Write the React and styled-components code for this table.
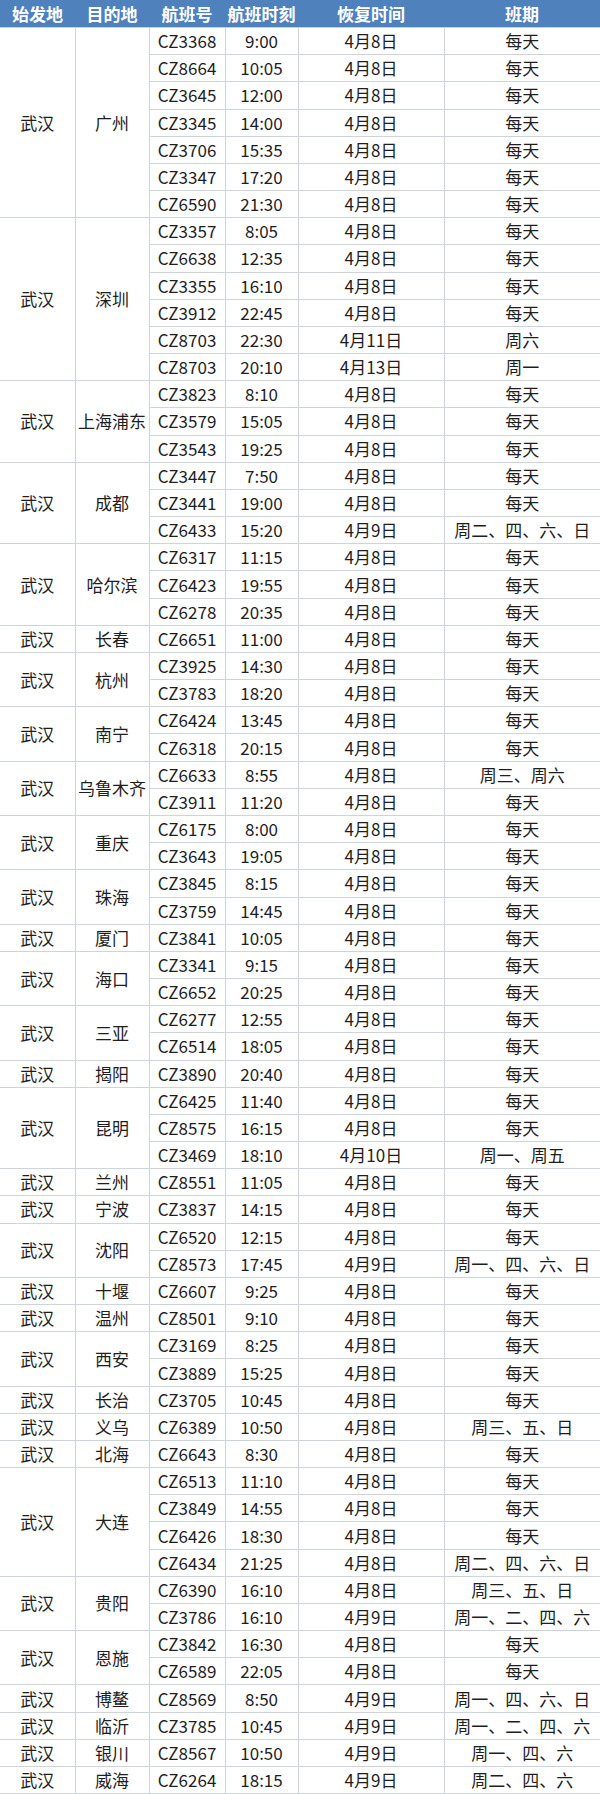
import React from 'react'
import styled, { createGlobalStyle } from 'styled-components'

const GlobalStyle = createGlobalStyle`
  html, body {
    margin: 0;
    padding: 0;
    background: #ffffff;
  }
  body {
    font-family: "Noto Sans CJK SC", "Noto Sans", sans-serif;
  }
`

// flight | time | date (default 4月8日) | days (default 每天)
const groups = [
  ['广州', [
    ['CZ3368', '9:00'], ['CZ8664', '10:05'], ['CZ3645', '12:00'], ['CZ3345', '14:00'],
    ['CZ3706', '15:35'], ['CZ3347', '17:20'], ['CZ6590', '21:30'],
  ]],
  ['深圳', [
    ['CZ3357', '8:05'], ['CZ6638', '12:35'], ['CZ3355', '16:10'], ['CZ3912', '22:45'],
    ['CZ8703', '22:30', '4月11日', '周六'], ['CZ8703', '20:10', '4月13日', '周一'],
  ]],
  ['上海浦东', [['CZ3823', '8:10'], ['CZ3579', '15:05'], ['CZ3543', '19:25']]],
  ['成都', [['CZ3447', '7:50'], ['CZ3441', '19:00'], ['CZ6433', '15:20', '4月9日', '周二、四、六、日']]],
  ['哈尔滨', [['CZ6317', '11:15'], ['CZ6423', '19:55'], ['CZ6278', '20:35']]],
  ['长春', [['CZ6651', '11:00']]],
  ['杭州', [['CZ3925', '14:30'], ['CZ3783', '18:20']]],
  ['南宁', [['CZ6424', '13:45'], ['CZ6318', '20:15']]],
  ['乌鲁木齐', [['CZ6633', '8:55', '4月8日', '周三、周六'], ['CZ3911', '11:20']]],
  ['重庆', [['CZ6175', '8:00'], ['CZ3643', '19:05']]],
  ['珠海', [['CZ3845', '8:15'], ['CZ3759', '14:45']]],
  ['厦门', [['CZ3841', '10:05']]],
  ['海口', [['CZ3341', '9:15'], ['CZ6652', '20:25']]],
  ['三亚', [['CZ6277', '12:55'], ['CZ6514', '18:05']]],
  ['揭阳', [['CZ3890', '20:40']]],
  ['昆明', [['CZ6425', '11:40'], ['CZ8575', '16:15'], ['CZ3469', '18:10', '4月10日', '周一、周五']]],
  ['兰州', [['CZ8551', '11:05']]],
  ['宁波', [['CZ3837', '14:15']]],
  ['沈阳', [['CZ6520', '12:15'], ['CZ8573', '17:45', '4月9日', '周一、四、六、日']]],
  ['十堰', [['CZ6607', '9:25']]],
  ['温州', [['CZ8501', '9:10']]],
  ['西安', [['CZ3169', '8:25'], ['CZ3889', '15:25']]],
  ['长治', [['CZ3705', '10:45']]],
  ['义乌', [['CZ6389', '10:50', '4月8日', '周三、五、日']]],
  ['北海', [['CZ6643', '8:30']]],
  ['大连', [
    ['CZ6513', '11:10'], ['CZ3849', '14:55'], ['CZ6426', '18:30'],
    ['CZ6434', '21:25', '4月8日', '周二、四、六、日'],
  ]],
  ['贵阳', [['CZ6390', '16:10', '4月8日', '周三、五、日'], ['CZ3786', '16:10', '4月9日', '周一、二、四、六']]],
  ['恩施', [['CZ3842', '16:30'], ['CZ6589', '22:05']]],
  ['博鳌', [['CZ8569', '8:50', '4月9日', '周一、四、六、日']]],
  ['临沂', [['CZ3785', '10:45', '4月9日', '周一、二、四、六']]],
  ['银川', [['CZ8567', '10:50', '4月9日', '周一、四、六']]],
  ['威海', [['CZ6264', '18:15', '4月9日', '周二、四、六']]],
]

const Table = styled.table`
  width: 600px;
  table-layout: fixed;
  border-collapse: collapse;
  font-size: 17px;
  color: #1e1e1e;
`

const Col = styled.col`
  width: ${p => p.$w}px;
`

const HeadCell = styled.th`
  height: 27px;
  padding: 0;
  background: #4f81bd;
  color: #ffffff;
  font-weight: 700;
  font-size: 17px;
  line-height: 27px;
  text-align: center;
  border-bottom: 1px solid #c8d0da;
`

const Row = styled.tr`
  height: 27.18px;
`

const Cell = styled.td`
  padding: 0;
  text-align: center;
  vertical-align: middle;
  white-space: nowrap;
  line-height: 20px;
  border: 1px solid #cdd4dc;
  &:first-child {
    border-left: none;
  }
  &:last-child {
    border-right: none;
  }
`

const widths = [75, 74, 76, 73, 146, 156]
const headers = ['始发地', '目的地', '航班号', '航班时刻', '恢复时间', '班期']

export default function App() {
  return (
    <>
      <GlobalStyle />
      <Table>
        <colgroup>
          {widths.map((w, i) => <Col key={i} $w={w} />)}
        </colgroup>
        <thead>
          <tr>
            {headers.map(h => <HeadCell key={h}>{h}</HeadCell>)}
          </tr>
        </thead>
        <tbody>
          {groups.map(([dest, flights], gi) =>
            flights.map(([no, time, date = '4月8日', days = '每天'], fi) => (
              <Row key={`${gi}-${fi}`}>
                {fi === 0 && <Cell rowSpan={flights.length}>武汉</Cell>}
                {fi === 0 && <Cell rowSpan={flights.length}>{dest}</Cell>}
                <Cell>{no}</Cell>
                <Cell>{time}</Cell>
                <Cell>{date}</Cell>
                <Cell>{days}</Cell>
              </Row>
            ))
          )}
        </tbody>
      </Table>
    </>
  )
}
